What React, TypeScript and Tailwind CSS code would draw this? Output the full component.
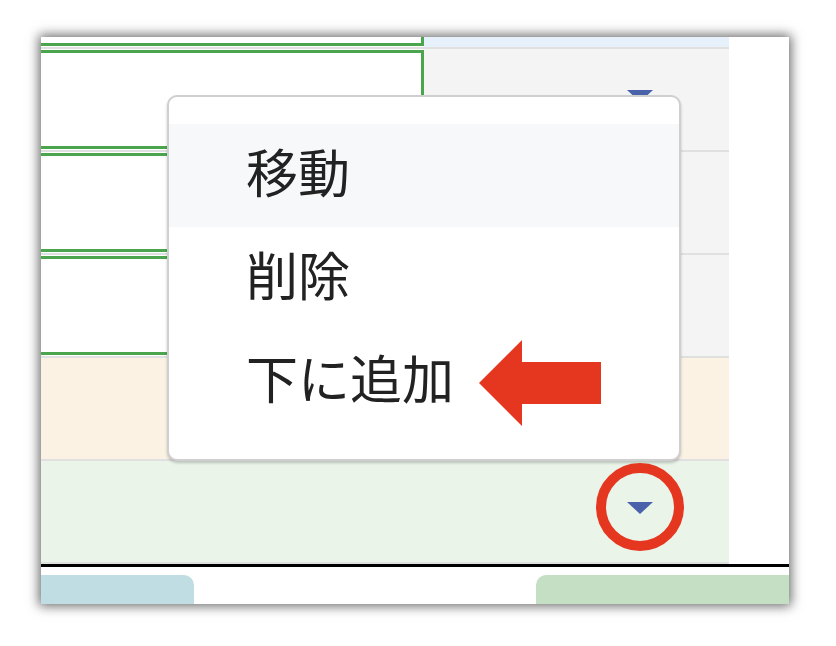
const font = { fontFamily: '"Noto Sans CJK JP", "Noto Sans", sans-serif' };

function Caret() {
  return (
    <svg width="26" height="12" viewBox="0 0 26 12" aria-hidden="true">
      <polygon points="0,0 26,0 13,12" fill="#4a62aa" />
    </svg>
  );
}

function FieldRow({ first = false }: { first?: boolean }) {
  return (
    <div className={`flex border-b-2 border-[#e0e0e0] ${first ? "h-[12px]" : "h-[103px]"}`}>
      <div className={`w-[383px] shrink-0 bg-white ${first ? "" : "py-px"}`}>
        {first ? (
          <div className="h-[9px] border-b-[3px] border-r-[3px] border-[#4aa54d]" />
        ) : (
          <div className="h-[99px] border-y-[3px] border-r-[3px] border-[#4aa54d]" />
        )}
      </div>
      <div
        className={`flex flex-1 justify-end pr-[76px] ${
          first ? "bg-[#e7f1fc]" : "bg-[#f4f4f4] pt-[41px]"
        }`}
      >
        {!first && <Caret />}
      </div>
    </div>
  );
}

function ColorRow({ bg }: { bg: string }) {
  return (
    <div className={`flex h-[103px] justify-end border-b-2 border-[#e0e0e0] pr-[76px] pt-[41px] ${bg}`}>
      <Caret />
    </div>
  );
}

const items = ["移動", "削除", "下に追加"];

function Menu() {
  return (
    <div className="absolute left-[126px] top-[58px] z-10 h-[366px] w-[514px] rounded-[10px] border-2 border-[#cfcfcf] bg-white pt-[27px] shadow-[0_2px_3px_rgba(0,0,0,0.2)]">
      {items.map((label, i) => (
        <div
          key={label}
          className={`flex h-[103px] items-center pb-[10px] pl-[77px] text-[52px] leading-none text-[#222] ${
            i === 0 ? "bg-[#f7f8fa]" : ""
          }`}
          style={font}
        >
          {label}
        </div>
      ))}
    </div>
  );
}

export default function App() {
  return (
    <div className="h-[646px] w-[836px] bg-white pl-[41px] pt-[37px]">
      <div className="relative h-[567px] w-[748px] overflow-hidden bg-white shadow-[0_0_11px_2px_rgba(0,0,0,0.6)]">
        <div className="w-[688px]">
          <FieldRow first />
          <FieldRow />
          <FieldRow />
          <FieldRow />
          <ColorRow bg="bg-[#fcf2e3]" />
          <ColorRow bg="bg-[#eaf4e9]" />
        </div>
        <div className="h-[3px] bg-black" />
        <div className="mt-[8px] flex justify-between">
          <div className="h-[29px] w-[153px] rounded-tr-[10px] bg-[#c0dde3]" />
          <div className="h-[29px] w-[253px] rounded-tl-[10px] bg-[#c5dfc4]" />
        </div>

        <Menu />

        {/* annotations */}
        <svg
          className="absolute left-[438px] top-[303px] z-20"
          width="122"
          height="86"
          viewBox="0 0 122 86"
          aria-hidden="true"
        >
          <polygon points="0,43 43,0 43,22 122,22 122,64 43,64 43,86" fill="#e5371f" />
        </svg>
        <div className="absolute left-[555px] top-[426px] z-20 size-[88px] rounded-full border-[10px] border-[#e5371f]" />
      </div>
    </div>
  );
}
